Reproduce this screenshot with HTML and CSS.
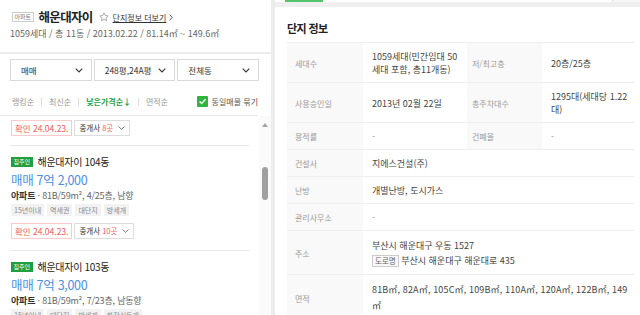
FILE: index.html
```html
<!DOCTYPE html>
<html lang="ko">
<head>
    <meta charset="UTF-8">
    <meta name="viewport" content="width=device-width, initial-scale=1.0">
    <title>해운대자이 - 단지 정보</title>
    <link rel="stylesheet" href="styles.css">
</head>
<body>
<div class="app">
    <aside class="side">
        <div class="complex-head">
            <div class="title-row">
                <span class="type-badge">아파트</span>
                <h1 class="complex-name">해운대자이</h1>
                <svg class="star" viewBox="0 0 10 10" width="10" height="10">
                    <path d="M5 .8l1.25 2.7 2.95.35-2.2 2 .6 2.9L5 7.3 2.4 8.75l.6-2.9-2.2-2 2.95-.35z" fill="none" stroke="#999" stroke-width=".8" stroke-linejoin="round"/>
                </svg>
                <a class="more-link" href="#">단지정보 더보기
                    <svg viewBox="0 0 4 7" width="4" height="7"><path d="M.6.6L3.3 3.5.6 6.4" fill="none" stroke="#444" stroke-width=".9"/></svg>
                </a>
            </div>
            <p class="complex-sub">1059세대 / 총 11동 / 2013.02.22 / 81.14㎡ ~ 149.6㎡</p>
        </div>

        <div class="filters">
            <div class="selects">
                <div class="select"><span>매매</span><svg viewBox="0 0 8 5" width="8" height="5"><path d="M.7.7L4 4 7.3.7" fill="none" stroke="#333" stroke-width="1.1"/></svg></div>
                <div class="select"><span>248평,24A평</span><svg viewBox="0 0 8 5" width="8" height="5"><path d="M.7.7L4 4 7.3.7" fill="none" stroke="#333" stroke-width="1.1"/></svg></div>
                <div class="select"><span>전체동</span><svg viewBox="0 0 8 5" width="8" height="5"><path d="M.7.7L4 4 7.3.7" fill="none" stroke="#333" stroke-width="1.1"/></svg></div>
            </div>
            <div class="sort-row">
                <ul class="sort-list">
                    <li>랭킹순</li>
                    <li>최신순</li>
                    <li class="active">낮은가격순↓</li>
                    <li>면적순</li>
                </ul>
                <label class="group-check">
                    <span class="check-box"><svg viewBox="0 0 11 11" width="11" height="11"><path d="M2.6 5.6l2 2 3.9-4.3" fill="none" stroke="#fff" stroke-width="1.4"/></svg></span>
                    동일매물 묶기
                </label>
            </div>
        </div>

        <div class="list-wrap">
            <div class="list">
                <div class="article article-tail">
                    <div class="confirm-row">
                        <span class="confirm">확인 24.04.23.</span>
                        <span class="agents"><span>중개사</span><em>8곳</em><svg viewBox="0 0 7 4" width="7" height="4"><path d="M.5.5L3.5 3.3 6.5.5" fill="none" stroke="#666" stroke-width=".9"/></svg></span>
                    </div>
                </div>

                <div class="article">
                    <div class="article-head">
                        <span class="owner-badge">집주인</span>
                        <span class="article-title">해운대자이 104동</span>
                    </div>
                    <div class="price">매매 7억 2,000</div>
                    <div class="spec"><b>아파트</b> · 81B/59m², 4/25층, 남향</div>
                    <div class="tags">
                        <span class="tag">15년이내</span>
                        <span class="tag">역세권</span>
                        <span class="tag">대단지</span>
                        <span class="tag">방세개</span>
                    </div>
                    <div class="confirm-row">
                        <span class="confirm">확인 24.04.23.</span>
                        <span class="agents"><span>중개사</span><em>10곳</em><svg viewBox="0 0 7 4" width="7" height="4"><path d="M.5.5L3.5 3.3 6.5.5" fill="none" stroke="#666" stroke-width=".9"/></svg></span>
                    </div>
                </div>

                <div class="article">
                    <div class="article-head">
                        <span class="owner-badge">집주인</span>
                        <span class="article-title">해운대자이 103동</span>
                    </div>
                    <div class="price">매매 7억 3,000</div>
                    <div class="spec"><b>아파트</b> · 81B/59m², 7/23층, 남동향</div>
                    <div class="tags">
                        <span class="tag">15년이내</span>
                        <span class="tag">대단지</span>
                        <span class="tag">방세개</span>
                        <span class="tag">화장실두개</span>
                    </div>
                </div>
            </div>
            <div class="scrollbar">
                <span class="scroll-up"></span>
                <span class="scroll-thumb"></span>
            </div>
        </div>
    </aside>

    <div class="divider"></div>

    <main class="detail">
        <div class="tab-strip">
            <span class="tab-active"></span>
            <span class="tab-end"></span>
        </div>
        <div class="detail-body">
            <h2 class="detail-title">단지 정보</h2>
            <table class="info-table">
                <colgroup>
                    <col class="col-label">
                    <col class="col-value">
                    <col class="col-label2">
                    <col>
                </colgroup>
                <tr>
                    <th>세대수</th>
                    <td>1059세대(민간임대 50<br>세대 포함, 총11개동)</td>
                    <th class="sub">저/최고층</th>
                    <td>20층/25층</td>
                </tr>
                <tr>
                    <th>사용승인일</th>
                    <td>2013년 02월 22일</td>
                    <th class="sub">총주차대수</th>
                    <td>1295대(세대당 1.22<br>대)</td>
                </tr>
                <tr>
                    <th>용적률</th>
                    <td class="empty">-</td>
                    <th class="sub">건폐율</th>
                    <td class="empty">-</td>
                </tr>
                <tr>
                    <th>건설사</th>
                    <td colspan="3">지에스건설(주)</td>
                </tr>
                <tr>
                    <th>난방</th>
                    <td colspan="3">개별난방, 도시가스</td>
                </tr>
                <tr>
                    <th>관리사무소</th>
                    <td colspan="3" class="empty">-</td>
                </tr>
                <tr>
                    <th>주소</th>
                    <td colspan="3" class="address">부산시 해운대구 우동 1527<br><span class="road-tag">도로명</span> 부산시 해운대구 해운대로 435</td>
                </tr>
                <tr>
                    <th>면적</th>
                    <td colspan="3" class="area">81B㎡, 82A㎡, 105C㎡, 109B㎡, 110A㎡, 120A㎡, 122B㎡, 149<br>㎡</td>
                </tr>
            </table>
        </div>
    </main>
</div>
</body>
</html>
```

FILE: styles.css
```css
body {
    margin: 0;
    font-family: "Noto Sans CJK KR", "Noto Sans", sans-serif;
    color: #333;
    background-color: #fff;
    overflow: hidden;
}

.app {
    display: flex;
    height: 315px;
    overflow: hidden;
}

/* left: complex summary + listings */

.side {
    width: 271px;
    flex: none;
    display: flex;
    flex-direction: column;
}

.complex-head {
    height: 52px;
    box-sizing: border-box;
    padding: 9px 10px 0;
}

.title-row {
    display: flex;
    align-items: center;
    height: 16px;
}

.type-badge {
    font-size: 6px;
    line-height: 8px;
    color: #777;
    border: 1px solid #ccc;
    padding: 0 1.5px;
    margin: 0 5px 0 2px;
}

.complex-name {
    margin: 0;
    font-size: 12.5px;
    line-height: 16px;
    font-weight: bold;
    letter-spacing: -0.7px;
    color: #222;
}

.star {
    margin-left: 6px;
}

.more-link {
    display: flex;
    align-items: center;
    gap: 3px;
    margin-left: 4px;
    font-size: 8px;
    color: #333;
    text-decoration: underline;
}

.complex-sub {
    margin: 3px 0 0;
    font-size: 9px;
    line-height: 12px;
    color: #666;
}

.filters {
    border-top: 2px solid #ececec;
    padding-top: 5px;
}

.selects {
    display: flex;
    gap: 2px;
    margin: 0 12px 0 10px;
}

.select {
    flex: 1;
    height: 22px;
    box-sizing: border-box;
    border: 1px solid #d9d9d9;
    padding: 0 8px 0 10px;
    display: flex;
    align-items: center;
    justify-content: space-between;
    font-size: 8.5px;
    color: #333;
}

.sort-row {
    display: flex;
    align-items: center;
    justify-content: space-between;
    height: 14px;
    margin: 13px 13px 0 0;
    padding: 0 0 7px 10px;
    border-bottom: 1px solid #e8e8e8;
}

.sort-list {
    display: flex;
    align-items: center;
    list-style: none;
    margin: 0;
    padding: 0 0 0 2px;
    font-size: 8px;
    color: #999;
}

.sort-list li + li::before {
    content: "";
    display: inline-block;
    width: 1px;
    height: 8px;
    margin: 0 7px;
    background-color: #ddd;
    vertical-align: middle;
}

.sort-list .active {
    color: #1fa341;
    font-weight: bold;
}

.group-check {
    display: flex;
    align-items: center;
    gap: 4px;
    font-size: 8px;
    color: #555;
}

.check-box {
    width: 11px;
    height: 11px;
    display: flex;
    background-color: #2db53f;
    border-radius: 1px;
}

.list-wrap {
    flex: 1;
    min-height: 0;
    display: flex;
    overflow: hidden;
}

.list {
    flex: 1;
    min-width: 0;
    padding: 0 10px;
}

.article {
    padding: 8px 0 11px 1px;
    border-bottom: 1px solid #e9e9e9;
}

.article-tail {
    padding: 4px 0 9px 1px;
}

.article-head {
    display: flex;
    align-items: center;
    height: 16px;
}

.owner-badge {
    font-size: 6px;
    line-height: 10px;
    padding: 0 2.5px;
    margin-right: 5px;
    color: #fff;
    background-color: #1f9f3e;
}

.article-title {
    font-size: 10px;
    line-height: 16px;
    letter-spacing: -0.3px;
    color: #222;
}

.price {
    font-size: 12.5px;
    line-height: 19px;
    letter-spacing: -0.3px;
    color: #4b8fe8;
}

.spec {
    font-size: 9px;
    line-height: 13px;
    letter-spacing: -0.2px;
    color: #666;
}

.spec b {
    color: #333;
}

.tags {
    display: flex;
    gap: 3px;
    margin-top: 2px;
}

.tag {
    font-size: 7px;
    line-height: 12px;
    padding: 0 3px;
    color: #888;
    background-color: #f2f2f2;
}

.confirm-row {
    display: flex;
    gap: 2px;
    margin-top: 7px;
}

.article-tail .confirm-row {
    margin-top: 0;
}

.confirm {
    font-size: 8.5px;
    line-height: 14px;
    padding: 0 3px;
    color: #f25a5a;
    border: 1px solid #fbcaca;
}

.agents {
    display: flex;
    align-items: center;
    gap: 2px;
    font-size: 7.5px;
    line-height: 14px;
    padding: 0 4px;
    color: #333;
    border: 1px solid #ddd;
}

.agents em {
    font-style: normal;
    color: #f25a5a;
}

.agents svg {
    margin-left: 3px;
}

.scrollbar {
    width: 12px;
    flex: none;
    display: flex;
    flex-direction: column;
    align-items: center;
    background-color: #fafafa;
}

.scroll-up {
    margin-top: 7px;
    width: 0;
    height: 0;
    border-left: 3px solid transparent;
    border-right: 3px solid transparent;
    border-bottom: 4px solid #a3a3a3;
}

.scroll-thumb {
    margin-top: 40px;
    width: 6px;
    height: 33px;
    border-radius: 3px;
    background-color: #a0a0a0;
}

/* right: complex detail */

.divider {
    width: 4px;
    flex: none;
    background-color: #ececec;
}

.detail {
    flex: 1;
    min-width: 0;
    display: flex;
    flex-direction: column;
}

.tab-strip {
    height: 7px;
    display: flex;
    justify-content: space-between;
    border-bottom: 5px solid #efefef;
}

.tab-active {
    width: 38px;
    margin-left: 10px;
    box-sizing: border-box;
    border-bottom: 2px solid #53c46a;
}

.tab-end {
    width: 27px;
    background-color: #f6f6f6;
    border-left: 1px solid #e2e2e2;
}

.detail-body {
    padding: 14px 6px 0 12px;
}

.detail-title {
    margin: 0 0 7px;
    font-size: 11px;
    line-height: 14px;
    font-weight: bold;
    letter-spacing: -0.6px;
    color: #222;
}

.info-table {
    width: 100%;
    table-layout: fixed;
    border-collapse: collapse;
    border-top: 1px solid #eee;
}

.col-label {
    width: 76px;
}

.col-value {
    width: 104px;
}

.col-label2 {
    width: 75px;
}

.info-table th,
.info-table td {
    padding: 7px 0 6px;
    line-height: 13px;
    text-align: left;
    vertical-align: middle;
    border-bottom: 1px solid #eee;
}

.info-table th {
    padding-left: 8px;
    font-size: 8px;
    font-weight: normal;
    color: #9a9a9a;
    background-color: #f9f9f9;
}

.info-table th.sub {
    padding-left: 5px;
}

.info-table td {
    padding-left: 9px;
    font-size: 9px;
    color: #444;
}

.info-table td.empty {
    color: #999;
}

.info-table td.address {
    line-height: 15px;
}

.info-table td.area {
    line-height: 16px;
    letter-spacing: 0.15px;
}

.road-tag {
    display: inline-block;
    font-size: 7.5px;
    line-height: 10px;
    padding: 0 2px;
    color: #666;
    background-color: #f8f8f8;
    border: 1px solid #ccc;
}
```
